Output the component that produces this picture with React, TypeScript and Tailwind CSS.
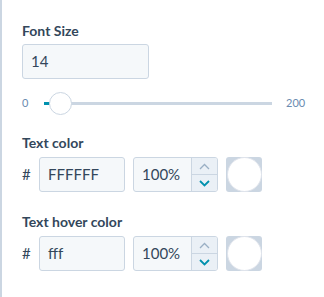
import React from 'react';

const Spinner = () => (
  <div className="flex w-[26px] flex-col border-l border-[#cbd6e2] bg-[#eaf0f6]">
    <div className="flex flex-1 items-center justify-center border-b border-[#cbd6e2]">
      <svg width="11" height="7" viewBox="0 0 11 7" fill="none">
        <path d="M1 6l4.5-4.5L10 6" stroke="#99afc4" strokeWidth="1.3" />
      </svg>
    </div>
    <div className="flex flex-1 items-center justify-center">
      <svg width="11" height="7" viewBox="0 0 11 7" fill="none">
        <path d="M1 1l4.5 4.5L10 1" stroke="#0091ae" strokeWidth="1.8" />
      </svg>
    </div>
  </div>
);

const ColorRow = ({ label, hex }: { label: string; hex: string }) => (
  <div>
    <div className="text-[14px] font-bold leading-[18px] text-[#33475b]">{label}</div>
    <div className="mt-[5px] flex h-[35px] items-center">
      <span className="w-[17px] text-[15px] text-[#33475b]">#</span>
      <div className="flex h-full w-[86px] items-center rounded-[3px] border border-[#cbd6e2] bg-[#f5f8fa] px-[8px] text-[15px] text-[#33475b]">
        {hex}
      </div>
      <div className="ml-[8px] flex h-full w-[85px] overflow-hidden rounded-[3px] border border-[#cbd6e2] bg-[#f5f8fa]">
        <div className="flex flex-1 items-center pl-[8px] text-[15px] text-[#33475b]">100%</div>
        <Spinner />
      </div>
      <div className="ml-[8px] flex h-[35px] w-[36px] items-center justify-center rounded-[3px] bg-[#cbd6e2]">
        <div className="h-[35px] w-[35px] rounded-full border border-[#dfe3eb] bg-white" />
      </div>
    </div>
  </div>
);

export default function App() {
  return (
    <div
      className="h-[297px] w-[324px] border-l-2 border-[#cbd6e2] bg-white pl-[20px] pt-[22px]"
      style={{ fontFamily: 'Lato, "Open Sans", sans-serif' }}
    >
      <div className="text-[14px] font-bold leading-[18px] text-[#33475b]">Font Size</div>
      <div className="mt-[4px] flex h-[35px] w-[127px] items-center rounded-[3px] border border-[#cbd6e2] bg-[#f5f8fa] px-[8px] text-[15px] text-[#33475b]">
        14
      </div>
      <div className="mt-[12px] flex h-[24px] items-center">
        <span className="w-[22px] text-[11px] text-[#6a8bb0]">0</span>
        <div className="relative h-[3px] w-[228px] bg-[#cbd6e2]">
          <div className="absolute left-0 top-0 h-[3px] w-[6px] bg-[#0091ae]" />
          <div className="absolute left-[5px] top-[-10px] h-[23px] w-[23px] rounded-full border border-[#cbd6e2] bg-white" />
        </div>
        <span className="ml-[14px] text-[11px] text-[#6a8bb0]">200</span>
      </div>
      <div className="mt-[19px]">
        <ColorRow label="Text color" hex="FFFFFF" />
      </div>
      <div className="mt-[21px]">
        <ColorRow label="Text hover color" hex="fff" />
      </div>
    </div>
  );
}
